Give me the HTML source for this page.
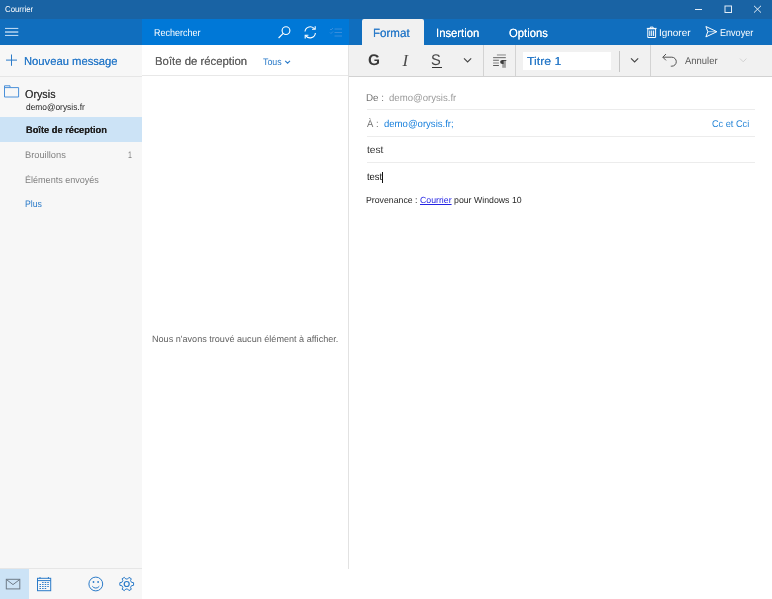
<!DOCTYPE html>
<html lang="fr"><head><meta charset="utf-8"><title>Courrier</title>
<style>
html,body{margin:0;padding:0;}
body{width:772px;height:599px;position:relative;overflow:hidden;background:#fff;font-family:"Liberation Sans",sans-serif;}
.b{position:absolute;}
.t{position:absolute;white-space:pre;line-height:normal;text-rendering:geometricPrecision;transform-origin:0 0;text-shadow:0 0 .35px currentColor;}
.t u{color:#2424e4;}
svg{position:absolute;overflow:visible;}
#txt{position:absolute;left:0;top:0;width:772px;height:599px;will-change:transform;}

</style></head>
<body>
<!-- backgrounds -->
<div class="b" style="left:0;top:0;width:772px;height:19px;background:#1963a4"></div>
<div class="b" style="left:0;top:19px;width:142px;height:26px;background:#106ebe"></div>
<div class="b" style="left:142px;top:19px;width:207px;height:26px;background:#0078d7"></div>
<div class="b" style="left:349px;top:19px;width:423px;height:26px;background:#106ebe"></div>
<div class="b" style="left:362px;top:19px;width:62px;height:26px;background:#f1f1f1;border-radius:2px 2px 0 0"></div>
<!-- sidebar -->
<div class="b" style="left:0;top:45px;width:142px;height:554px;background:#f7f7f7"></div>
<div class="b" style="left:0;top:76px;width:142px;height:1px;background:#e6e6e6"></div>
<div class="b" style="left:0;top:117px;width:142px;height:25px;background:#cce3f6"></div>
<div class="b" style="left:0;top:568px;width:142px;height:1px;background:#e6e6e6"></div>
<div class="b" style="left:0;top:569px;width:28.7px;height:30px;background:#cce3f6"></div>
<!-- middle pane -->
<div class="b" style="left:142px;top:45px;width:206px;height:554px;background:#fff"></div>
<div class="b" style="left:142px;top:75px;width:206px;height:1px;background:#e8e8e8"></div>
<div class="b" style="left:348px;top:45px;width:1px;height:524px;background:#e2e2e2"></div>
<!-- toolbar -->
<div class="b" style="left:349px;top:45px;width:423px;height:31px;background:#f1f1f1"></div>
<div class="b" style="left:349px;top:76px;width:423px;height:1px;background:#d2d2d2"></div>
<div class="b" style="left:483px;top:45px;width:1px;height:31px;background:#d3d3d3"></div>
<div class="b" style="left:515px;top:45px;width:1px;height:31px;background:#d3d3d3"></div>
<div class="b" style="left:650px;top:45px;width:1px;height:31px;background:#d3d3d3"></div>
<div class="b" style="left:618.5px;top:50.5px;width:1px;height:21px;background:#c6c6c6"></div>
<div class="b" style="left:523px;top:52px;width:88px;height:17.5px;background:#fff"></div>
<!-- compose lines -->
<div class="b" style="left:367px;top:109.4px;width:388px;height:1px;background:#ececec"></div>
<div class="b" style="left:367px;top:135.7px;width:388px;height:1px;background:#ececec"></div>
<div class="b" style="left:367px;top:161.8px;width:388px;height:1px;background:#ececec"></div>
<!-- caret -->
<div class="b" style="left:382px;top:171.5px;width:1px;height:11px;background:#111"></div>
<!-- S underline -->
<div class="b" style="left:431.8px;top:66.8px;width:10px;height:1px;background:#333"></div>

<!-- ICONS -->
<svg width="772" height="599" viewBox="0 0 772 599" style="left:0;top:0" fill="none" stroke-linecap="butt">
 <!-- window controls -->
 <g stroke="#e4eef7" stroke-width="1">
  <path d="M695 9.5H702"/>
  <rect x="725" y="6" width="6.5" height="6.5"/>
  <path d="M754 5.8L761 12.6M761 5.8L754 12.6"/>
 </g>
 <!-- hamburger -->
 <g fill="#b9d6f1">
  <rect x="5" y="27.9" width="13.3" height="1.1"/><rect x="5" y="31.3" width="13.3" height="1.45"/><rect x="5" y="34.9" width="13.3" height="1.1"/>
 </g>
 <!-- plus -->
 <path d="M6 60.1H17M11.5 54.5V65.8" stroke="#2b7bc9" stroke-width="1"/>
 <!-- folder -->
 <path d="M4.5 97V85.8H10V87.6H18.6V97Z" stroke="#4a90d9" stroke-width="1"/>
 <path d="M4.5 87.6H10" stroke="#4a90d9" stroke-width="1"/>
 <!-- search -->
 <g stroke="#fff" stroke-width="1.1">
  <circle cx="286" cy="30.6" r="3.9"/>
  <path d="M283.2 33.4L278.6 38"/>
 </g>
 <!-- sync -->
 <g stroke="#fff" stroke-width="1.1">
  <path d="M305 31.5A5.3 5.3 0 0 1 314.6 29"/>
  <path d="M315.4 33A5.3 5.3 0 0 1 305.8 35.6"/>
  <path d="M312 29.3H315.2V26.2"/>
  <path d="M308.4 35.3H305.2V38.4"/>
 </g>
 <!-- selection mode (dim) -->
 <g stroke="#3a8edc" stroke-width=".95">
  <path d="M334.5 29H342M334.5 32.5H342M334.5 36H342"/>
  <path d="M330 29L331 30L333 28M330 32.5L331 33.5L333 31.5"/>
 </g>
 <!-- trash -->
 <g stroke="#fff" stroke-width="1">
  <path d="M647.8 28.8H655.6V37.5H647.8Z"/>
  <path d="M646.8 28.4H656.6M650.3 28.2V27.1H653.1V28.2"/>
  <path d="M649.8 30.5V36M651.7 30.5V36M653.6 30.5V36"/>
 </g>
 <!-- send -->
 <g stroke="#fff" stroke-width="1">
  <path d="M705.9 26.5L716.9 31.7L705.9 36.9L707.8 31.7Z" stroke-linejoin="round"/>
  <path d="M707.8 31.7H716" stroke-opacity=".65"/>
 </g>
 <!-- chevrons -->
 <path d="M464 58.4L467.6 62L471.2 58.4" stroke="#444" stroke-width="1.1"/>
 <path d="M631 58.4L634.6 62L638.2 58.4" stroke="#444" stroke-width="1.1"/>
 <path d="M740 58.6L743.2 61.8L746.4 58.6" stroke="#d2d2d2" stroke-width="1"/>
 <path d="M285.2 60.8L287.6 63.2L290 60.8" stroke="#2b7bc9" stroke-width="1.1"/>
 <!-- paragraph style icon -->
 <rect x="496.9" y="54.1" width="9" height="1.7" fill="#b2b2b2"/>
 <rect x="493.1" y="57" width="12.7" height="1.2" fill="#7c7c7c"/>
 <rect x="493.1" y="59.7" width="5.8" height="1.2" fill="#7c7c7c"/>
 <rect x="493.1" y="62.2" width="5.8" height="1.6" fill="#ababab"/>
 <rect x="493.1" y="65" width="5.8" height="1" fill="#5a5a5a"/>
 <rect x="502.2" y="60" width="3.7" height="7.8" fill="#a0a0a0"/>
 <rect x="502.2" y="60" width="4.1" height="1" fill="#4a4a4a"/>
 <path d="M503.6 60H502.5A2.4 2.05 0 0 0 502.5 64.1H503.6Z" fill="#3c3c3c"/>
 <!-- undo -->
 <g stroke="#555" stroke-width="1">
  <path d="M662.8 57.2H671.8A4.5 4.5 0 0 1 671.8 66.2H670.8"/>
  <path d="M666 54L662.8 57.2L666 60.4"/>
 </g>
 <!-- mail -->
 <g stroke="#6f7b88" stroke-width="1">
  <rect x="6.3" y="579.3" width="13.5" height="9.6"/>
  <path d="M6.5 579.6L13 584.6L19.6 579.6"/>
 </g>
 <!-- calendar -->
 <g stroke="#2b7bc9" stroke-width="1">
  <rect x="37.5" y="578.3" width="13.2" height="12.4"/>
  <path d="M37.5 580.6H50.7M40 577V578.6M48.4 577V578.6"/>
 </g>
 <g fill="#2b7bc9">
  <rect x="42.1" y="582" width="1.5" height="1"/><rect x="44.7" y="582" width="1.5" height="1"/><rect x="47.3" y="582" width="1.5" height="1"/><rect x="39.5" y="584" width="1.5" height="1"/><rect x="42.1" y="584" width="1.5" height="1"/><rect x="44.7" y="584" width="1.5" height="1"/><rect x="47.3" y="584" width="1.5" height="1"/><rect x="39.5" y="586" width="1.5" height="1"/><rect x="42.1" y="586" width="1.5" height="1"/><rect x="44.7" y="586" width="1.5" height="1"/><rect x="47.3" y="586" width="1.5" height="1"/><rect x="39.5" y="588" width="1.5" height="1"/><rect x="42.1" y="588" width="1.5" height="1"/><rect x="44.7" y="588" width="1.5" height="1"/>
 </g>
 <!-- smiley -->
 <g stroke="#2b7bc9" stroke-width="1">
  <circle cx="95.8" cy="584" r="6.9"/>
  <path d="M92.3 586.2A4.2 4.2 0 0 0 99.3 586.2"/>
 </g>
 <circle cx="93.5" cy="582" r="0.9" fill="#2b7bc9"/><circle cx="98.1" cy="582" r="0.9" fill="#2b7bc9"/>
 <!-- gear -->
 <g stroke="#2b7bc9" stroke-width="1" stroke-linejoin="round">
  <circle cx="126.7" cy="584" r="2.5" stroke-width="1.2"/>
  <path d="M131.52 582.34L133.57 582.66L133.57 585.34L131.52 585.66L130.55 587.35L131.29 589.28L128.98 590.62L127.67 589.01L125.73 589.01L124.42 590.62L122.11 589.28L122.85 587.35L121.88 585.66L119.83 585.34L119.83 582.66L121.88 582.34L122.85 580.65L122.11 578.72L124.42 577.38L125.73 578.99L127.67 578.99L128.98 577.38L131.29 578.72L130.55 580.65Z"/>
 </g>
</svg>

<!-- text -->
<div id="txt">
<span class="t" style="left:5.38px;top:4px;font-size:8.5px;transform:scaleX(0.9192);color:#fff;text-shadow:none">Courrier</span>
<span class="t" style="left:24.00px;top:56px;font-size:11.5px;transform:scaleX(0.9759);color:#2b7bc9">Nouveau message</span>
<span class="t" style="left:25.25px;top:89px;font-size:11.5px;transform:scaleX(0.9379);color:#3c3c3c">Orysis</span>
<span class="t" style="left:25.54px;top:102px;font-size:9px;transform:scaleX(0.9304);color:#1e1e1e;text-shadow:none">demo@orysis.fr</span>
<span class="t" style="left:25.50px;top:125px;font-size:9.5px;transform:scaleX(0.9760);color:#222;font-weight:bold">Boîte de réception</span>
<span class="t" style="left:25.28px;top:149px;font-size:9.4px;transform:scaleX(0.9907);color:#828282;text-shadow:none">Brouillons</span>
<span class="t" style="left:128.25px;top:149px;font-size:9.4px;transform:scaleX(0.7500);color:#828282;text-shadow:none">1</span>
<span class="t" style="left:25.39px;top:174px;font-size:9.4px;transform:scaleX(0.9646);color:#828282;text-shadow:none">Éléments envoyés</span>
<span class="t" style="left:25.11px;top:198px;font-size:9.4px;transform:scaleX(0.9294);color:#2b7bc9;text-shadow:none">Plus</span>
<span class="t" style="left:153.87px;top:28px;font-size:10px;transform:scaleX(0.8975);color:#fff;text-shadow:none">Rechercher</span>
<span class="t" style="left:154.50px;top:56px;font-size:11.5px;transform:scaleX(0.9873);color:#636363">Boîte de réception</span>
<span class="t" style="left:262.61px;top:57px;font-size:9.6px;transform:scaleX(0.9237);color:#2b7bc9;text-shadow:none">Tous</span>
<span class="t" style="left:152.40px;top:334px;font-size:9.2px;transform:scaleX(0.9884);color:#606060;text-shadow:none">Nous n'avons trouvé aucun élément à afficher.</span>
<span class="t" style="left:373.44px;top:26px;font-size:12px;transform:scaleX(0.9650);color:#2b7bc9">Format</span>
<span class="t" style="left:436.44px;top:26px;font-size:12px;transform:scaleX(0.9404);color:#fff;text-shadow:0 0 .2px #fff">Insertion</span>
<span class="t" style="left:509.21px;top:26px;font-size:12px;transform:scaleX(0.9378);color:#fff;text-shadow:0 0 .2px #fff">Options</span>
<span class="t" style="left:659.17px;top:28px;font-size:10px;transform:scaleX(0.9931);color:#fff;text-shadow:none">Ignorer</span>
<span class="t" style="left:719.85px;top:28px;font-size:10px;transform:scaleX(0.9053);color:#fff;text-shadow:none">Envoyer</span>
<span class="t" style="left:368.02px;top:52px;font-size:15.4px;transform:scaleX(1.0000);color:#3a3a3a;font-weight:bold;text-shadow:none">G</span>
<span class="t" style="left:402.46px;top:51px;font-size:17px;transform:scaleX(1.0000);color:#4a4a4a;font-style:italic;font-family:'Liberation Serif',serif;text-shadow:none">I</span>
<span class="t" style="left:431.09px;top:52px;font-size:15.4px;transform:scaleX(0.9525);color:#474747;text-shadow:none">S</span>
<span class="t" style="left:527.20px;top:56px;font-size:11.5px;transform:scaleX(1.0708);color:#2b7bc9">Titre 1</span>
<span class="t" style="left:685.00px;top:56px;font-size:10px;transform:scaleX(0.9444);color:#5a5a5a;text-shadow:none">Annuler</span>
<span class="t" style="left:365.57px;top:93px;font-size:10px;transform:scaleX(0.9821);color:#727272;text-shadow:none">De :</span>
<span class="t" style="left:388.80px;top:93px;font-size:10px;transform:scaleX(0.9586);color:#9a9a9a;text-shadow:none">demo@orysis.fr</span>
<span class="t" style="left:366.98px;top:119px;font-size:10px;transform:scaleX(0.9460);color:#727272;text-shadow:none">À :</span>
<span class="t" style="left:384.32px;top:119px;font-size:10px;transform:scaleX(0.9551);color:#167fdc;text-shadow:none">demo@orysis.fr;</span>
<span class="t" style="left:712.43px;top:119px;font-size:9.8px;transform:scaleX(0.9363);color:#2b88d8;text-shadow:none">Cc et Cci</span>
<span class="t" style="left:366.50px;top:145px;font-size:10px;transform:scaleX(1.0208);color:#333;text-shadow:none">test</span>
<span class="t" style="left:366.66px;top:172px;font-size:10px;transform:scaleX(0.9411);color:#111;text-shadow:none">test</span>
<span class="t" style="left:366.36px;top:195px;font-size:8.8px;transform:scaleX(0.9945);color:#262626;text-shadow:none">Provenance : <u>Courrier</u> pour Windows 10</span>
</div>
</body></html>
